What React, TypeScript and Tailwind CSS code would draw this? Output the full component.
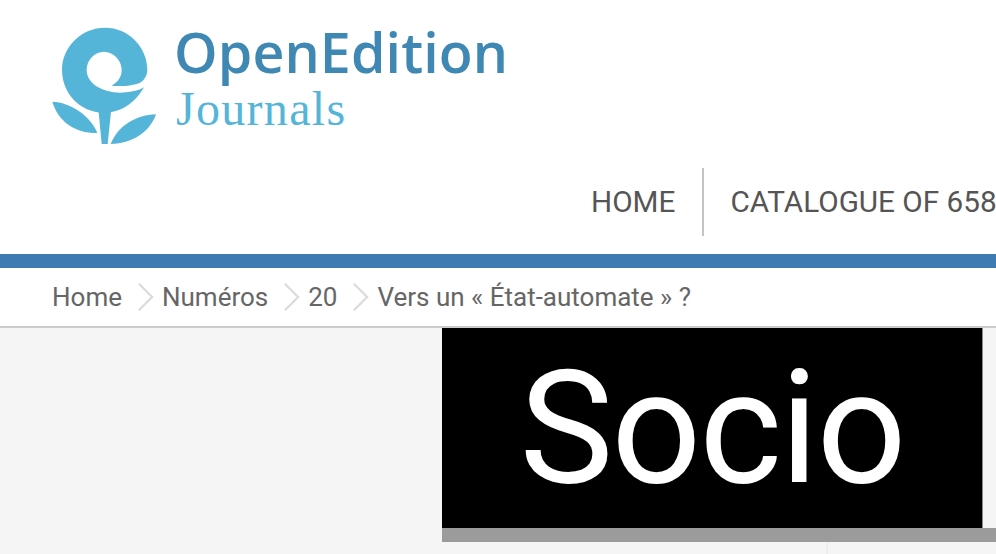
export default function App() {
  return (
    <div className="h-[554px] w-full overflow-hidden bg-[#f5f5f5] font-['Roboto',sans-serif]">
      {/* Header */}
      <header className="bg-white">
        <div className="flex h-[168px] items-start pl-[40px] pt-[15px]">
          <svg viewBox="0 0 390 420" className="h-[140px] w-[130px] shrink-0" fill="#55b5d8">
            <path d="M312 217C285 265 240 295 190 293C120 292 66 235 66 165C66 95 125 38 195 38C265 38 322 95 322 165C322 180 312 198 300 203C280 212 245 215 215 212C235 200 245 185 245 165C245 135 220 110 192 110C163 110 140 135 140 165C140 205 185 232 240 233C265 233 295 228 312 217Z" />
            <path d="M176 290L213 290L203 387L185 387Z" />
            <path d="M37 260C90 262 150 300 172 354C105 355 55 320 37 260Z" />
            <path d="M348 298C290 300 235 330 212 387C280 385 330 350 348 298Z" />
          </svg>
          <div className="ml-[4px] flex flex-col pt-[6px]">
            <span className="font-['Open_Sans',sans-serif] text-[55.5px] leading-[62px] font-[650] tracking-[0.1px] text-[#3f88b4]">
              OpenEdition
            </span>
            <span className="ml-[2px] font-['Liberation_Serif',serif] text-[48px] leading-[52px] tracking-[1.3px] text-[#55b5d8]">
              Journals
            </span>
          </div>
        </div>

        {/* Nav */}
        <nav className="flex h-[68px] justify-end whitespace-nowrap text-[29.7px] text-[#555555]">
          <div className="flex w-[405px] shrink-0 items-center">
            <a className="pr-[27px]">HOME</a>
            <div className="h-[68px] w-[2px] shrink-0 bg-[#c4c4c4]" />
            <a className="pl-[26px]">CATALOGUE OF 658 JOURNALS</a>
          </div>
        </nav>
        <div className="mt-[18px] h-[14px] bg-[#3f7bb3]" />
      </header>

      {/* Breadcrumb */}
      <div className="flex h-[60px] items-center border-b-2 border-[#cccccc] bg-white pl-[52px] text-[26px] text-[#666666]">
        <span>Home</span>
        <Chevron />
        <span>Numéros</span>
        <Chevron />
        <span>20</span>
        <Chevron />
        <span>Vers un « État-automate » ?</span>
      </div>

      {/* Content */}
      <main className="ml-[442px] flex flex-col">
        <div className="flex">
          <div className="flex h-[200px] w-[541px] shrink-0 items-center justify-center border-r border-[#8a8a8a] bg-black">
            <span className="text-[158px] leading-none font-[370] tracking-[-2px] text-white blur-[0.4px]">Socio</span>
          </div>
        </div>
        <div className="h-[14px] bg-[#9b9b9b]" />
        <div className="h-[12px] w-[386px] border-r-2 border-[#eeeeee]" />
      </main>
    </div>
  );
}

function Chevron() {
  return (
    <svg viewBox="0 0 18 30" className="mr-[8px] ml-[15px] h-[30px] w-[17px] shrink-0" fill="none" stroke="#dcdcdc" strokeWidth="2.5">
      <path d="M2 1L16 15L2 29" />
    </svg>
  );
}
